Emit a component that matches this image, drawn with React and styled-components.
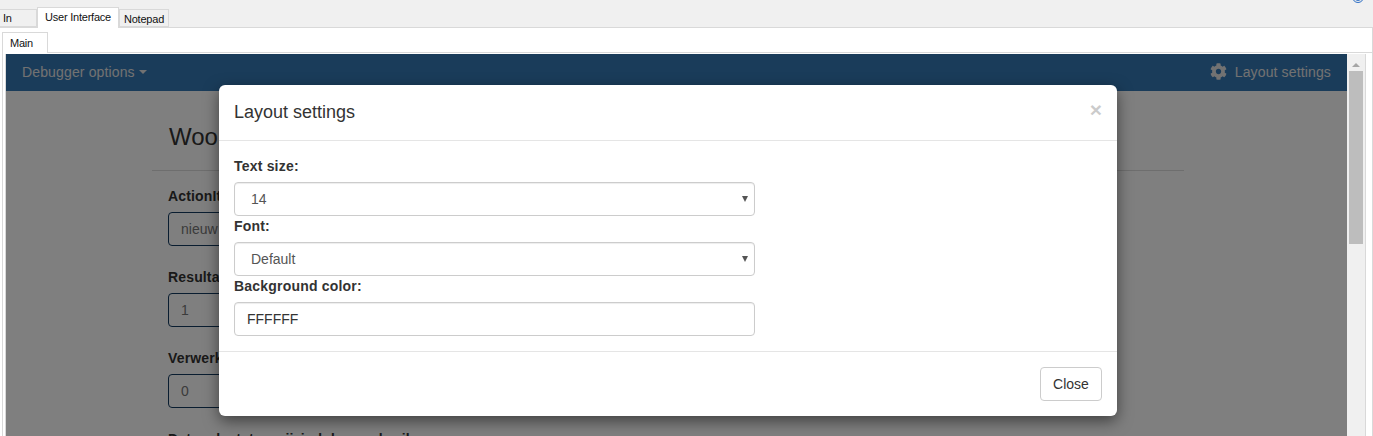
import styled, { createGlobalStyle } from "styled-components";
import { FaCog } from "react-icons/fa";

const GlobalStyle = createGlobalStyle`
  html, body {
    margin: 0;
    padding: 0;
    background: #fff;
    overflow: hidden;
    font-family: "Liberation Sans", Arial, sans-serif;
  }
  * {
    box-sizing: border-box;
  }
`;

const Window = styled.div`
  width: 1373px;
  height: 436px;
  overflow: hidden;
  display: flex;
  flex-direction: column;
`;

const TopBar = styled.div`
  height: 28px;
  flex: none;
  display: flex;
  align-items: flex-end;
  background: #f0f0f0;
  border-bottom: 1px solid #d9d9d9;
  padding-right: 9px;
`;

const TopTab = styled.div`
  height: ${({ $active }) => ($active ? "21px" : "18px")};
  margin-bottom: ${({ $active }) => ($active ? "-1px" : "0")};
  width: ${({ $w }) => $w}px;
  padding-left: ${({ $pad }) => $pad}px;
  padding-top: ${({ $top }) => $top}px;
  background: ${({ $active }) => ($active ? "#fff" : "#f0f0f0")};
  border: 1px solid #d9d9d9;
  border-bottom: ${({ $active }) => ($active ? "none" : "1px solid #d9d9d9")};
  border-left: ${({ $first }) => ($first ? "none" : "1px solid #d9d9d9")};
  font-size: 11px;
  line-height: 13px;
  letter-spacing: -0.22px;
  color: #111;
  white-space: nowrap;
`;

const HelpIcon = styled.svg`
  align-self: flex-start;
  margin-left: auto;
  margin-top: -9px;
  width: 12px;
  height: 12px;
`;

const TabArea = styled.div`
  flex: 1;
  min-height: 0;
  display: flex;
  flex-direction: column;
  padding: 4px 0 0 2px;
  border-right: 1px solid #d9d9d9;
`;

const SubTab = styled.div`
  width: 46px;
  height: 21px;
  flex: none;
  margin-bottom: -1px;
  position: relative;
  z-index: 1;
  padding: 4px 0 0 7px;
  background: #fff;
  border: 1px solid #d9d9d9;
  border-bottom: none;
  font-size: 11px;
  line-height: 13px;
  letter-spacing: -0.22px;
  color: #111;
`;

const TabPanel = styled.div`
  flex: 1;
  min-height: 0;
  display: flex;
  border: 1px solid #d9d9d9;
  border-bottom: none;
  border-right: none;
  padding: 1px 6px 0 2px;
  background: #fff;
`;

const Frame = styled.div`
  flex: 1;
  min-width: 0;
  display: flex;
  border: 1px solid #d9d9d9;
  border-bottom: none;
  border-top: none;
`;

const Viewport = styled.div`
  flex: 1;
  min-width: 0;
  position: relative;
  overflow: hidden;
  background: #fff;
`;

const NavBar = styled.div`
  height: 37px;
  padding: 0 16px 2px;
  display: flex;
  align-items: center;
  justify-content: space-between;
  background: #3478b4;
  color: #e4e4e4;
  font-size: 14px;
  letter-spacing: 0.14px;
`;

const NavItem = styled.div`
  display: flex;
  align-items: center;
  gap: ${({ $gap }) => $gap}px;
`;

const Caret = styled.span`
  width: 0;
  height: 0;
  border-top: 4px solid #e4e4e4;
  border-left: 4px solid transparent;
  border-right: 4px solid transparent;
`;

const Page = styled.div`
  width: 1032px;
  margin-left: 146px;
  padding-top: 30px;
`;

const PageTitle = styled.h3`
  margin: 0;
  padding: 0 17px 18px;
  font-size: 24px;
  font-weight: 400;
  line-height: 31px;
  color: #333;
  border-bottom: 1px solid #ddd;
`;

const PageForm = styled.div`
  padding: 15px 16px 0;
`;

const PageLabel = styled.div`
  font-size: 14px;
  font-weight: 700;
  line-height: 20px;
  letter-spacing: 0.15px;
  color: #333;
  margin-bottom: 6px;
  white-space: nowrap;
`;

const PageInput = styled.div`
  width: 700px;
  height: 34px;
  padding: 6px 12px;
  margin-bottom: ${({ $mb }) => $mb}px;
  border: 1px solid #123a60;
  border-radius: 4px;
  font-size: 14px;
  line-height: 20px;
  color: #777;
`;

const Backdrop = styled.div`
  position: absolute;
  inset: 0;
  background: rgba(0, 0, 0, 0.5);
`;

const Modal = styled.div`
  width: 898px;
  margin: 31px 0 0 213px;
  background: #fff;
  border-radius: 6px;
  box-shadow: 0 5px 15px rgba(0, 0, 0, 0.5);
`;

const ModalHeader = styled.div`
  height: 56px;
  padding: 0 15px 2px;
  display: flex;
  align-items: center;
  justify-content: space-between;
  border-bottom: 1px solid #e5e5e5;
`;

const ModalTitle = styled.div`
  font-size: 18px;
  line-height: 26px;
  color: #333;
`;

const CloseX = styled.span`
  font-size: 21px;
  font-weight: 700;
  line-height: 1;
  color: #000;
  opacity: 0.2;
  margin-top: -5px;
`;

const ModalBody = styled.div`
  padding: 15px;
  border-bottom: 1px solid #e5e5e5;
  height: 211px;
`;

const FieldLabel = styled.label`
  display: block;
  font-size: 14px;
  font-weight: 700;
  line-height: 20px;
  letter-spacing: 0.2px;
  color: #333;
  margin-bottom: 6px;
`;

const SelectWrap = styled.div`
  position: relative;
  width: 521px;
`;

const Select = styled.select`
  display: block;
  appearance: none;
  width: 100%;
  height: 34px;
  padding: 0 12px 0 16px;
  background: #fff;
  border: 1px solid #ccc;
  border-radius: 4px;
  box-shadow: inset 0 1px 1px rgba(0, 0, 0, 0.075);
  font-family: inherit;
  font-size: 14px;
  color: #555;
`;

const SelectArrow = styled.span`
  position: absolute;
  top: 14px;
  right: 7px;
  width: 0;
  height: 0;
  border-top: 6px solid #555;
  border-left: 3px solid transparent;
  border-right: 3px solid transparent;
  pointer-events: none;
`;

const TextInput = styled.input`
  display: block;
  width: 521px;
  height: 34px;
  padding: 6px 12px;
  background: #fff;
  border: 1px solid #ccc;
  border-radius: 4px;
  box-shadow: inset 0 1px 1px rgba(0, 0, 0, 0.075);
  font-family: inherit;
  font-size: 14px;
  color: #333;
`;

const ModalFooter = styled.div`
  height: 64px;
  padding: 15px;
  display: flex;
  justify-content: flex-end;
`;

const CloseButton = styled.button`
  width: 62px;
  height: 34px;
  background: #fff;
  border: 1px solid #ccc;
  border-radius: 4px;
  font-family: inherit;
  font-size: 14px;
  color: #333;
`;

const ScrollBar = styled.div`
  width: 18px;
  flex: none;
  padding: 9px 2px 0;
  background: #f0f0f0;
  display: flex;
  flex-direction: column;
  align-items: center;
`;

const ScrollUp = styled.span`
  width: 0;
  height: 0;
  margin-bottom: 4px;
  border-bottom: 4px solid #a6a6a6;
  border-left: 4px solid transparent;
  border-right: 4px solid transparent;
`;

const ScrollThumb = styled.div`
  width: 14px;
  height: 173px;
  background: #bdbdbd;
`;

export default function App() {
  return (
    <>
      <GlobalStyle />
      <Window>
        <TopBar>
          <TopTab $w={37} $pad={3} $top={2} $first>In</TopTab>
          <TopTab $w={82} $pad={7} $top={3} $active>User Interface</TopTab>
          <TopTab $w={50} $pad={4} $top={3}>Notepad</TopTab>
          <HelpIcon viewBox="0 0 12 12">
            <circle cx="6" cy="6" r="5.5" fill="none" stroke="#2f6fc4" />
            <circle cx="6" cy="6" r="3.5" fill="#cfe0f5" stroke="#2f6fc4" />
          </HelpIcon>
        </TopBar>
        <TabArea>
          <SubTab>Main</SubTab>
          <TabPanel>
            <Frame>
              <Viewport>
                <NavBar>
                  <NavItem $gap={4}>
                    Debugger options
                    <Caret />
                  </NavItem>
                  <NavItem $gap={8}>
                    <FaCog size={17} />
                    Layout settings
                  </NavItem>
                </NavBar>
                <Page>
                  <PageTitle>Woonplaats</PageTitle>
                  <PageForm>
                    <PageLabel>ActionItem</PageLabel>
                    <PageInput $mb={21}>nieuw</PageInput>
                    <PageLabel>Resultaat</PageLabel>
                    <PageInput $mb={21}>1</PageInput>
                    <PageLabel>Verwerkt</PageLabel>
                    <PageInput $mb={21}>0</PageInput>
                    <PageLabel>Datum laatst gewijzigd door gebruiker</PageLabel>
                  </PageForm>
                </Page>
                <Backdrop>
                  <Modal>
                    <ModalHeader>
                      <ModalTitle>Layout settings</ModalTitle>
                      <CloseX>×</CloseX>
                    </ModalHeader>
                    <ModalBody>
                      <FieldLabel>Text size:</FieldLabel>
                      <SelectWrap>
                        <Select defaultValue="14">
                          <option value="14">14</option>
                        </Select>
                        <SelectArrow />
                      </SelectWrap>
                      <FieldLabel>Font:</FieldLabel>
                      <SelectWrap>
                        <Select defaultValue="default">
                          <option value="default">Default</option>
                        </Select>
                        <SelectArrow />
                      </SelectWrap>
                      <FieldLabel>Background color:</FieldLabel>
                      <TextInput defaultValue="FFFFFF" />
                    </ModalBody>
                    <ModalFooter>
                      <CloseButton>Close</CloseButton>
                    </ModalFooter>
                  </Modal>
                </Backdrop>
              </Viewport>
              <ScrollBar>
                <ScrollUp />
                <ScrollThumb />
              </ScrollBar>
            </Frame>
          </TabPanel>
        </TabArea>
      </Window>
    </>
  );
}
